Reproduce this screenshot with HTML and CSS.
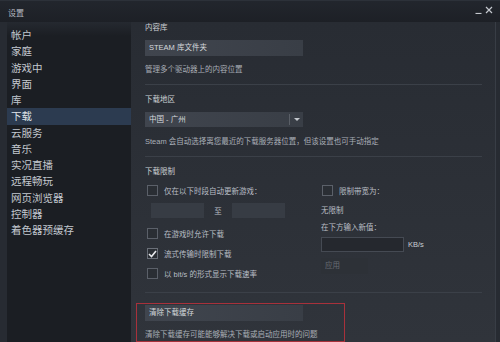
FILE: index.html
```html
<!DOCTYPE html>
<html lang="zh-CN">
<head>
    <meta charset="UTF-8">
    <title>设置</title>
    <link rel="stylesheet" href="styles.css">
</head>
<body>
    <div class="titlebar">
        <span class="title">设置</span>
        <div class="winctl">
            <svg width="7" height="8" viewBox="0 0 7 8"><path d="M0.5 7.5h6" stroke="#c4c8ce" stroke-width="1.2"/></svg>
            <svg width="8" height="8" viewBox="0 0 8 8"><path d="M1 1l6 6M7 1l-6 6" stroke="#c4c8ce" stroke-width="1.2"/></svg>
        </div>
    </div>

    <div class="main">
        <ul class="sidebar">
            <li>帐户</li>
            <li>家庭</li>
            <li>游戏中</li>
            <li>界面</li>
            <li>库</li>
            <li class="active">下载</li>
            <li>云服务</li>
            <li>音乐</li>
            <li>实况直播</li>
            <li>远程畅玩</li>
            <li>网页浏览器</li>
            <li>控制器</li>
            <li>着色器预缓存</li>
        </ul>

        <div class="content">
            <div class="head">内容库</div>
            <div class="btn wide first">STEAM 库文件夹</div>
            <div class="desc">管理多个驱动器上的内容位置</div>
            <div class="sep"></div>

            <div class="head">下载地区</div>
            <div class="select">
                <span>中国 - 广州</span>
                <span class="arrow"><svg width="6" height="4" viewBox="0 0 6 4"><path d="M0 0h6L3 3z" fill="#c4c8ce"/></svg></span>
            </div>
            <div class="desc gap9">Steam 会自动选择离您最近的下载服务器位置，但该设置也可手动指定</div>
            <div class="sep"></div>

            <div class="head">下载限制</div>
            <div class="limits">
                <div class="col">
                    <div class="check"><span class="box"></span>仅在以下时段自动更新游戏：</div>
                    <div class="times">
                        <span class="field"></span>
                        <span class="to">至</span>
                        <span class="field"></span>
                    </div>
                    <div class="check c2"><span class="box"></span>在游戏时允许下载</div>
                    <div class="check c3"><span class="box on"><svg width="9" height="8" viewBox="0 0 9 8"><path d="M1 4l2.5 2.5L8 1" stroke="#e8eaed" stroke-width="1.6" fill="none"/></svg></span>流式传输时限制下载</div>
                    <div class="check c3"><span class="box"></span>以 bit/s 的形式显示下载速率</div>
                </div>
                <div class="col right">
                    <div class="check"><span class="box"></span>限制带宽为：</div>
                    <div class="plain nolimit">无限制</div>
                    <div class="plain newval">在下方输入新值：</div>
                    <div class="kbrow">
                        <span class="kbinput"></span>
                        <span>KB/s</span>
                    </div>
                    <div class="apply">应用</div>
                </div>
            </div>
            <div class="sep last"></div>

            <div class="highlight">
                <div class="btn wide">清除下载缓存</div>
                <div class="desc cache">清除下载缓存可能能够解决下载或启动应用时的问题</div>
            </div>
        </div>
    </div>
</body>
</html>
```

FILE: styles.css
```css
body {
    margin: 0;
    width: 500px;
    height: 342px;
    overflow: hidden;
    background-color: #24282e;
    font-family: 'Liberation Sans', 'Noto Sans CJK SC', sans-serif;
    color: #b9bec5;
}

.titlebar {
    height: 22px;
    display: flex;
    justify-content: space-between;
    align-items: center;
    padding: 0 7px 0 8px;
    background: linear-gradient(#22262d, #1d2026);
    border-top: 1px solid #2c3139;
    box-sizing: border-box;
}

.title {
    font-size: 8px;
    color: #b4b9c0;
    margin-top: 2px;
}

.winctl {
    display: flex;
    gap: 3px;
    margin-top: -3px;
}

.main {
    display: flex;
    height: 320px;
    padding-left: 7px;
    background-color: #272b32;
}

.sidebar {
    list-style: none;
    margin: 0;
    padding: 5px 0 0 0;
    width: 124px;
    background: linear-gradient(#252930, #1b1e23 14px);
}

.sidebar li {
    font-size: 10.5px;
    line-height: 16.25px;
    height: 16.25px;
    padding-left: 4px;
    color: #c3c8cf;
}

.sidebar li.active {
    background-color: #2c3b50;
    color: #dfe3e8;
}

.content {
    flex: 1;
    padding: 0 13px 0 14px;
    margin-right: 4px;
    border-right: 1px solid #383d45;
    background: linear-gradient(#282c33, #30343b);
}

.head {
    font-size: 7.5px;
    line-height: 12px;
    color: #cdd1d6;
}

.desc {
    font-size: 7.5px;
    line-height: 12px;
    margin-top: 8px;
    color: #a9aeb6;
}

.desc.gap9 {
    margin-top: 9px;
}

.sep {
    height: 1px;
    background-color: #3b4048;
    margin: 8px 0 9px 0;
}

.btn {
    height: 16px;
    line-height: 16px;
    font-size: 7.5px;
    padding-left: 4px;
    color: #d6dade;
    background: linear-gradient(90deg, #40454e, #393e46);
    box-sizing: border-box;
}

.wide {
    width: 158px;
}

.btn.first {
    margin-top: 6px;
}

.select {
    display: flex;
    justify-content: space-between;
    width: 158px;
    height: 15px;
    line-height: 15px;
    margin-top: 6px;
    padding-left: 4px;
    box-sizing: border-box;
    font-size: 7.5px;
    color: #d6dade;
    background: linear-gradient(90deg, #40454e, #393e46);
}

.arrow {
    display: flex;
    align-items: center;
    justify-content: center;
    width: 13px;
    border-left: 1px solid #5a5f67;
    margin: 2px 0;
}

.limits {
    display: grid;
    grid-template-columns: 176px 1fr;
    margin-top: 6.5px;
    font-size: 7.5px;
}

.check {
    display: flex;
    align-items: center;
    gap: 6px;
    height: 12px;
    margin-left: 2px;
    color: #b9bec5;
}

.right .check {
    margin-left: 1px;
}

.box {
    width: 9px;
    height: 9px;
    border: 1px solid #5b6069;
    background-color: #2a2e34;
    display: flex;
    align-items: center;
    justify-content: center;
    flex-shrink: 0;
}

.box.on {
    border-color: #6a6f78;
}

.times {
    display: flex;
    align-items: center;
    margin: 6px 0 0 6px;
}

.field {
    width: 53px;
    height: 15px;
    background-color: #373c44;
}

.to {
    width: 28px;
    text-align: center;
    color: #b9bec5;
}

.check.c2 {
    margin-top: 10px;
}

.check.c3 {
    margin-top: 8px;
}

.plain {
    line-height: 12px;
    color: #b9bec5;
}

.nolimit {
    margin-top: 8.5px;
}

.newval {
    margin-top: 4.5px;
}

.kbrow {
    display: flex;
    align-items: center;
    gap: 4px;
    margin-top: 3px;
    color: #c9cdd2;
}

.kbinput {
    width: 83px;
    height: 15px;
    box-sizing: border-box;
    border: 1px solid #454a53;
    background-color: #25282e;
}

.apply {
    width: 47px;
    height: 16px;
    line-height: 16px;
    margin-top: 6px;
    padding-left: 4px;
    box-sizing: border-box;
    color: #676c74;
    background-color: #2d3137;
}

.sep.last {
    margin: 12px 0 10px 0;
}

.highlight {
    width: 209px;
    height: 39px;
    margin-left: -9px;
    padding: 1px 0 0 8px;
    box-sizing: border-box;
    border: 1px solid #a8313b;
}

.desc.cache {
    margin-top: 8px;
}
```
